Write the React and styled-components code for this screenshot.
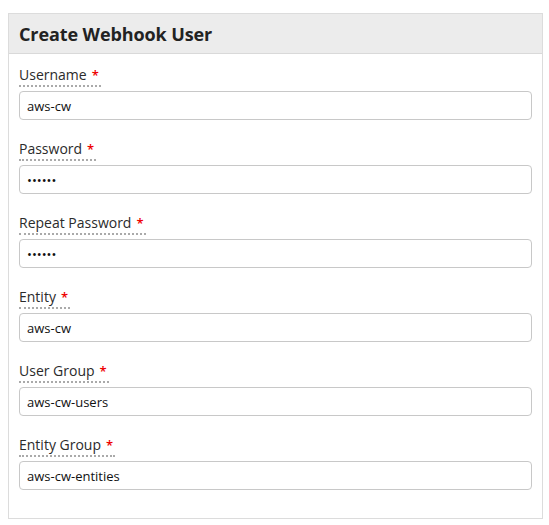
import React from "react";
import styled, { createGlobalStyle } from "styled-components";

const GlobalStyle = createGlobalStyle`
  body {
    margin: 0;
    background: #ffffff;
    font-family: "Open Sans", "Noto Sans", Arial, sans-serif;
    color: #222;
  }
`;

const Panel = styled.div`
  margin: 13px 0 0 8px;
  width: 535px;
  border: 1px solid #dcdcdc;
  box-sizing: border-box;
  background: #fff;
`;

const Header = styled.div`
  background: #ececec;
  border-bottom: 1px solid #d9d9d9;
  height: 40px;
  box-sizing: border-box;
  display: flex;
  align-items: center;
  padding: 0 10px;
  h2 {
    margin: 0;
    font-size: 18px;
    font-weight: 700;
    color: #222;
    letter-spacing: -0.1px;
  }
`;

const Body = styled.div`
  padding: 11px 10px 28px 10px;
  display: flex;
  flex-direction: column;
  gap: 19px;
`;

const Field = styled.div`
  display: flex;
  flex-direction: column;
  align-items: flex-start;
`;

const Label = styled.label`
  display: inline-block;
  font-size: 14px;
  line-height: 20px;
  color: #2b2b2b;
  border-bottom: 2px dotted #aaaaaa;
  padding-right: 2px;
  margin-bottom: 4px;
`;

const Required = styled.span`
  color: #e00;
  margin-left: 5px;
  font-size: 13px;
  font-weight: 600;
`;

const Input = styled.input`
  width: 100%;
  height: 29px;
  box-sizing: border-box;
  border: 1px solid #c8c8c8;
  border-radius: 4px;
  padding: 0 7px;
  font-family: inherit;
  font-size: 13px;
  color: #111;
  background: #fff;
  outline: none;
`;

const fields = [
  { label: "Username", value: "aws-cw", type: "text" },
  { label: "Password", value: "secret", type: "password" },
  { label: "Repeat Password", value: "secret", type: "password" },
  { label: "Entity", value: "aws-cw", type: "text" },
  { label: "User Group", value: "aws-cw-users", type: "text" },
  { label: "Entity Group", value: "aws-cw-entities", type: "text" },
];

export default function App() {
  return (
    <>
      <GlobalStyle />
      <Panel>
        <Header>
          <h2>Create Webhook User</h2>
        </Header>
        <Body>
          {fields.map((f) => (
            <Field key={f.label}>
              <Label>
                {f.label}
                <Required>*</Required>
              </Label>
              <Input type={f.type} defaultValue={f.value} readOnly />
            </Field>
          ))}
        </Body>
      </Panel>
    </>
  );
}
